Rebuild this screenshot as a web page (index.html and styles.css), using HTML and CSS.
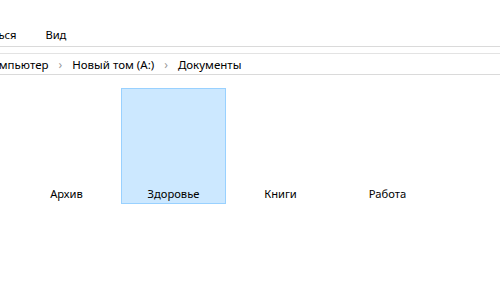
FILE: index.html
```html
<!DOCTYPE html>
<html lang="ru">
<head>
    <meta charset="UTF-8">
    <title>Документы</title>
    <link rel="stylesheet" href="styles.css">
</head>
<body>

    <!-- Ribbon tabs -->
    <div class="ribbon">
        <span class="ribbon-tab tab-share">Поделиться</span>
        <span class="ribbon-tab">Вид</span>
    </div>

    <!-- Address bar -->
    <div class="address-bar">
        <div class="crumbs">
            <span class="crumb crumb-first">Компьютер</span>
            <span class="crumb-sep">&#8250;</span>
            <span class="crumb">Новый том (A:)</span>
            <span class="crumb-sep">&#8250;</span>
            <span class="crumb">Документы</span>
        </div>
    </div>

    <!-- Folder view -->
    <div class="folder-view">
        <div class="folder-item"><span class="folder-name">Архив</span></div>
        <div class="folder-item selected"><span class="folder-name">Здоровье</span></div>
        <div class="folder-item"><span class="folder-name">Книги</span></div>
        <div class="folder-item"><span class="folder-name">Работа</span></div>
    </div>

</body>
</html>
```

FILE: styles.css
```css
/* Global Styles */
body {
    font-family: 'Noto Sans', 'Open Sans', sans-serif;
    font-size: 11.2px;
    color: #000;
    background-color: #fff;
    margin: 0;
    padding: 0;
    overflow: hidden;
}

/* Ribbon */
.ribbon {
    height: 47px;
    box-sizing: border-box;
    border-bottom: 1px solid #dadada;
    display: flex;
    align-items: flex-end;
    gap: 29px;
    padding-bottom: 3px;
}
.ribbon-tab {
    line-height: 16px;
    white-space: nowrap;
}
.tab-share {
    margin-left: -48px;
}

/* Address bar */
.address-bar {
    margin-top: 6px;
    border-top: 1px solid #e3e3e3;
    border-bottom: 1px solid #dadada;
    height: 20px;
    overflow: hidden;
}
.crumbs {
    display: flex;
    align-items: center;
    gap: 10px;
    padding-top: 1px;
    line-height: 19px;
    font-size: 11.5px;
    margin-left: -15px;
    white-space: nowrap;
}
.crumb-sep {
    color: #9a9a9a;
    font-size: 12px;
}

/* Folder items */
.folder-view {
    display: flex;
    gap: 2px;
    padding: 13px 0 0 14px;
}
.folder-item {
    width: 105px;
    height: 116px;
    box-sizing: border-box;
    border: 1px solid transparent;
    display: flex;
    align-items: flex-end;
    justify-content: center;
    padding-bottom: 1px;
}
.folder-item.selected {
    background-color: #cce8ff;
    border-color: #99d1ff;
}
.folder-name {
    line-height: 16px;
}
```
